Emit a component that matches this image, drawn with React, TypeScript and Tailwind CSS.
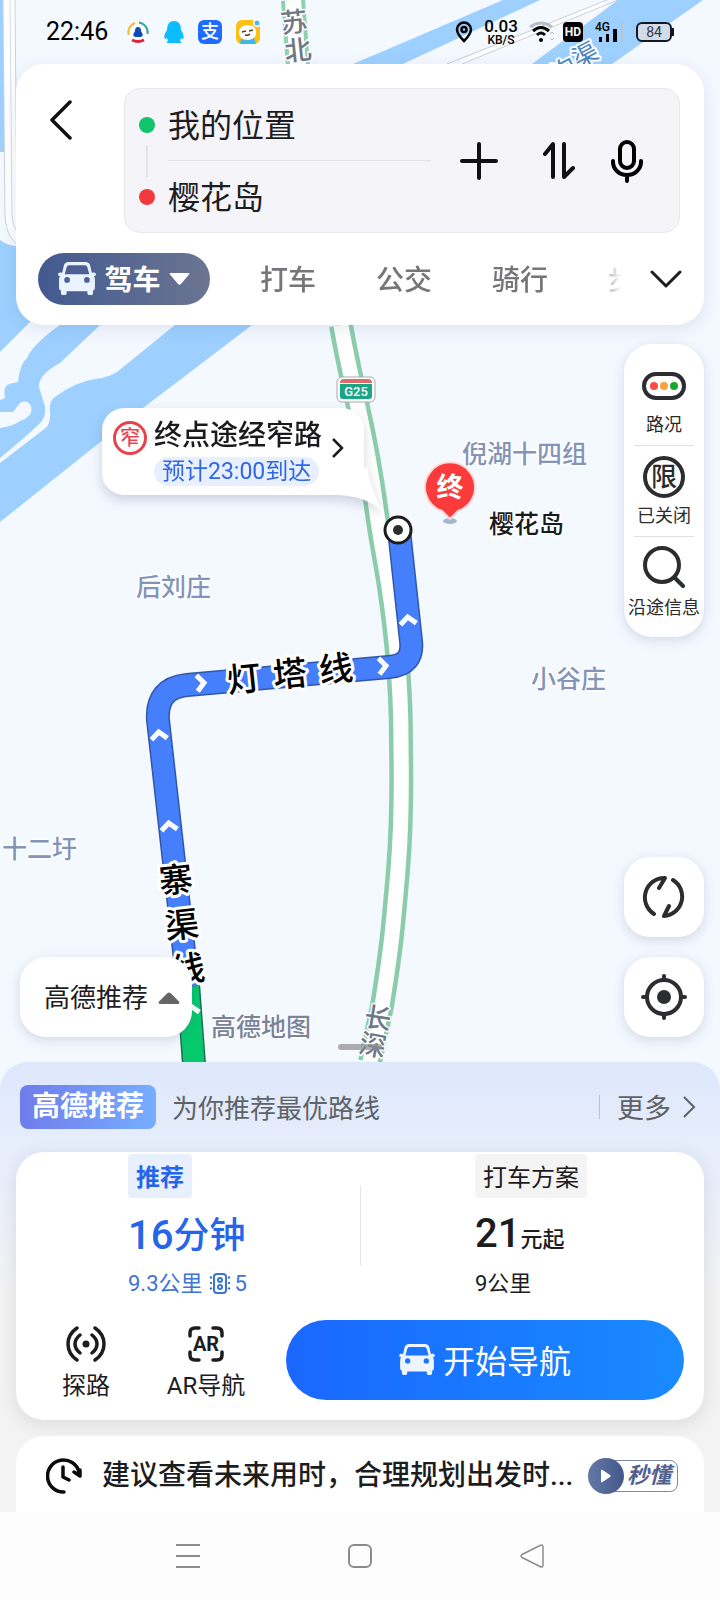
import React from "react";

const CHEVRONS = [
  { x: 408, y: 620, r: -6 },
  { x: 383, y: 666, r: 86 },
  { x: 201, y: 683, r: 85 },
  { x: 159, y: 735, r: -6 },
  { x: 169, y: 826, r: -6 },
  { x: 191, y: 1009, r: -6 },
];

const PLACES = [
  { text: "后刘庄", x: 136, y: 596 },
  { text: "倪湖十四组", x: 462, y: 463 },
  { text: "小谷庄", x: 531, y: 688 },
  { text: "十二圩", x: 2, y: 858 },
];

const ROAD_NAMES = [
  { text: "灯", x: 244, y: 679, r: -6 },
  { text: "塔", x: 290, y: 674, r: -6 },
  { text: "线", x: 336, y: 669, r: -6 },
  { text: "寨", x: 176, y: 880, r: -6 },
  { text: "渠", x: 182, y: 925, r: -6 },
  { text: "线", x: 188, y: 969, r: -6 },
];

const HIGHWAY_NAMES = [
  { text: "苏", x: 294, y: 22, r: -6 },
  { text: "北", x: 298, y: 50, r: -6 },
  { text: "长", x: 378, y: 1018, r: 9 },
  { text: "深", x: 373, y: 1045, r: 11 },
];

const HIGHWAY =
  "M341 325 C346 355 352 380 358 407 S371 470 376 507 S385 560 389 587 S395 630 397 653 S401 710 401 740 S403 810 398 870 S391 950 382 1006 L370 1062";
const ROUTE =
  "M399 530 L411 641 Q414 665 389 667 L187 685 Q156 688 158 720 L174 862 L188 987";

function MapCanvas() {
  return (
    <svg
      className="absolute inset-0 h-full w-full"
      viewBox="0 0 720 1062"
      preserveAspectRatio="xMidYMin slice"
      fontFamily="Roboto, 'Noto Sans CJK SC', sans-serif"
      aria-label="地图"
    >
      <rect width="720" height="1062" fill="#f4f8ff" />
      <g fill="#9dd0ff">
        <path d="M0 0H4V152H0z" />
        <path d="M0 240Q8 246 18 246L34 318L0 352z" />
        <path d="M60 325H100L60 363Q38 375 39 387L45 407Q47 418 37 426Q22 440 0 458V428Q14 426 20 421Q34 416 31 406Q27 399 20 403L13 412H0V400L5 398Q3 386 9 384L18 382Q20 364 27 358Q33 344 60 325z" />
        <path d="M175 325H252L143 408L0 522V463L47 427Q51 420 50 411Q49 401 55 397Q75 382 95 379Q113 377 122 368z" />
        <path d="M503 0H540L403 64H353z" />
        <path d="M618 0H703L612 64H532z" />
      </g>
      <path d="M607 0L447 64" stroke="#c9ccd2" strokeWidth="1" fill="none" />
      <path d="M605 4L462 62" stroke="#ffffff" strokeWidth="5" fill="none" />
      <path d="M618 0L462 64" stroke="#c9ccd2" strokeWidth="1" fill="none" />
      <path d="M9 0L11 215Q12 242 34 244" stroke="#c6d3e3" strokeWidth="13" fill="none" />
      <path d="M9 0L11 215Q12 242 34 244" stroke="#ffffff" strokeWidth="11" fill="none" />
      <path d="M10 0L12 213Q12 236 30 240" stroke="#cddcec" strokeWidth="1" fill="none" />

      <path d="M293 0L298 66" stroke="#8fd0ae" strokeWidth="24" />
      <path d="M293 0L298 66" stroke="#ffffff" strokeWidth="16" />
      <path d={HIGHWAY} stroke="#8bcdab" strokeWidth="24" fill="none" />
      <path d={HIGHWAY} stroke="#ffffff" strokeWidth="15" fill="none" />

      <g>
        <rect x="337" y="377" width="38" height="25" rx="5" fill="#ffffff" stroke="#a9a9a9" />
        <path d="M340 383q0-4 4-4h24q4 0 4 4z" fill="#dd6b6b" />
        <path d="M340 384h32v12q0 3-3 3h-26q-3 0-3-3z" fill="#1aa587" />
        <text x="356" y="396" textAnchor="middle" fontSize="13" fontWeight="500" fill="#ffffff">G25</text>
      </g>

      <g fill="none" strokeLinejoin="round">
        <path d="M188 984L194 1064" stroke="#1b6f55" strokeWidth="24" />
        <path d="M188 984L194 1064" stroke="#06c96e" strokeWidth="21" />
        <path d={ROUTE} stroke="#3057a8" strokeWidth="24" />
        <path d={ROUTE} stroke="#457ffc" strokeWidth="21" />
        {CHEVRONS.map((c) => (
          <path
            key={`${c.x}-${c.y}`}
            d="M-8 4L0 -3L8 4"
            transform={`translate(${c.x} ${c.y}) rotate(${c.r})`}
            stroke="#ffffff"
            strokeWidth="5"
            strokeLinejoin="miter"
          />
        ))}
      </g>
      <circle cx="398" cy="530" r="13" fill="#ffffff" stroke="#1d1d1f" strokeWidth="3" />
      <circle cx="398" cy="530" r="5" fill="#2d2d2f" />

      <g fill="#8394b8" fontSize="25" fontWeight="500" stroke="#ffffff" strokeWidth="3" strokeLinejoin="round" paintOrder="stroke">
        {PLACES.map((p) => (
          <text key={p.text} x={p.x} y={p.y}>{p.text}</text>
        ))}
      </g>
      <g fontSize="34" fontWeight="500" stroke="#ffffff" strokeWidth="6" strokeLinejoin="round" textAnchor="middle" paintOrder="stroke">
        {ROAD_NAMES.map((p) => (
          <text key={`${p.text}${p.y}`} transform={`translate(${p.x} ${p.y}) rotate(${p.r})`} y="12">{p.text}</text>
        ))}
      </g>
      <g fontSize="27" fontWeight="500" fill="#6f7888" stroke="#ffffff" strokeWidth="3" strokeLinejoin="round" textAnchor="middle" paintOrder="stroke">
        {HIGHWAY_NAMES.map((p) => (
          <text key={p.text} transform={`translate(${p.x} ${p.y}) rotate(${p.r})`} y="10">{p.text}</text>
        ))}
      </g>
      <g fontSize="25" fill="#4a86c5" stroke="#ffffff" strokeWidth="4" strokeLinejoin="round" textAnchor="middle" paintOrder="stroke">
        <text transform="translate(564 70) rotate(-28)" y="9">沟</text>
        <text transform="translate(585 55) rotate(-28)" y="9">渠</text>
      </g>

      <ellipse cx="450" cy="521" rx="7" ry="3" fill="#9fb9c9" />
      <path
        d="M450 519L442 511A25 25 0 1 1 458 511z"
        fill="#fb3a3c"
        stroke="#ffd9d9"
        strokeWidth="2"
        strokeLinejoin="round"
      />
      <text x="450" y="497" textAnchor="middle" fontSize="27" fontWeight="700" fill="#ffffff">终</text>
      <text x="489" y="533" fontSize="25" fontWeight="500" fill="#1a1a1c" stroke="#ffffff" strokeWidth="3" paintOrder="stroke">樱花岛</text>
      <text x="211" y="1036" fontSize="25" fontWeight="500" fill="#7b839c" stroke="#ffffff" strokeWidth="2" paintOrder="stroke">高德地图</text>
    </svg>
  );
}

function CarIcon({ className, hole }: { className: string; hole: string }) {
  return (
    <svg className={className} viewBox="0 0 40 36" fill="currentColor" aria-hidden="true">
      <path d="M11 0h18q4 0 5 4l2 9q3 2 3 6v8q0 3-2 3v3q0 2-2 2h-2q-2 0-2-2v-2H9v2q0 2-2 2H5q-2 0-2-2v-3q-2 0-2-3v-8q0-4 3-6l2-9q1-4 5-4z" />
      <rect x="0" y="11" width="5" height="4" rx="2" />
      <rect x="35" y="11" width="5" height="4" rx="2" />
      <path d="M11.500 3.500h17q2 0 2.500 2L33 13H7l2-7.500q.5-2 2.500-2z" fill={hole} />
      <circle cx="9.500" cy="19" r="3" fill={hole} />
      <circle cx="30.500" cy="19" r="3" fill={hole} />
    </svg>
  );
}

function StatusBar() {
  return (
    <div className="relative flex h-16 items-center pr-[46px] pl-[46px] text-black">
      <time className="w-[80px] text-[25px]">22:46</time>
      <div className="flex items-center gap-[14px]">
        <svg width="24" height="24" viewBox="0 0 24 24" aria-hidden="true">
          <circle cx="12" cy="12" r="11" fill="#fff" />
          <path d="M2.500 15A10 10 0 0 1 9 3" stroke="#f7b731" strokeWidth="2" fill="none" />
          <path d="M13 2.500A10 10 0 0 1 21.500 14" stroke="#35a79c" strokeWidth="2" fill="none" />
          <path d="M6 20Q12 23 18 20" stroke="#d9263c" strokeWidth="3" fill="none" />
          <path d="M12 7q3 0 3 4l2 4-2 2H9l-2-2 2-4q0-4 3-4z" fill="#1148b8" />
        </svg>
        <svg width="20" height="24" viewBox="0 0 20 24" aria-hidden="true">
          <path d="M10 1q7 0 7 9 4 6 2 9-1 0-2-1l-1 3q2 1 1 2H3q-1-1 1-2l-1-3q-1 1-2 1-2-3 2-9 0-9 7-9z" fill="#0cbcff" />
        </svg>
        <div className="grid h-6 w-6 place-items-center rounded-md bg-[#1f6bff] text-lg leading-none font-medium text-white">支</div>
        <svg width="25" height="24" viewBox="0 0 25 24" aria-hidden="true">
          <rect width="24" height="24" rx="6" fill="#fdbf14" />
          <path d="M12 5q8 0 8 8 0 6-7 7-10 0-10-7 0-8 9-8z" fill="#fff" />
          <path d="M6 12l4-1M13 11l4-1M9 15q3 1 5-1" stroke="#5a3a1a" strokeWidth="1.500" fill="none" />
          <path d="M5 19q7 3 13-1l2 6H4z" fill="#3ab6e8" />
          <circle cx="21" cy="3" r="4" fill="#fff" />
          <circle cx="21" cy="3" r="2.500" fill="#58b4e8" />
        </svg>
      </div>
      <svg className="ml-auto" width="18" height="22" viewBox="0 0 18 22" fill="none" stroke="#000" strokeWidth="2.500" aria-hidden="true">
        <path d="M9 20Q2 13 2 8.500A7 7 0 0 1 16 8.500Q16 13 9 20z" />
        <circle cx="9" cy="8.500" r="2.500" />
      </svg>
      <div className="ml-2 flex w-[40px] flex-col items-center font-medium">
        <span className="text-[17px] leading-4">0.03</span>
        <span className="text-xs leading-3">KB/S</span>
      </div>
      <svg className="ml-2" width="26" height="22" viewBox="0 0 26 22" fill="none" aria-hidden="true">
        <path d="M1 6Q12 -2 23 6" stroke="#b9bec6" strokeWidth="3" />
        <path d="M4 10Q12 3 20 10M8 14Q12 10 16 14" stroke="#000" strokeWidth="3" />
        <circle cx="12" cy="19" r="2" fill="#000" />
        <path d="M21 13l2-2 2 2M21 17l2 2 2-2" stroke="#b9bec6" />
      </svg>
      <div className="ml-2 grid h-5 w-5 place-items-center rounded bg-black text-xs font-bold text-white">HD</div>
      <svg className="ml-3" width="29" height="22" viewBox="0 0 29 22" aria-label="4G">
        <text x="0" y="10" fontSize="12" fontWeight="500" fontFamily="Roboto, sans-serif">4G</text>
        <path d="M4 16h3v5H4zM11 13h3v8h-3zM18 8h4v13h-4z" />
        <path d="M26 1h2v20h-2z" fill="#b9c4d2" />
      </svg>
      <div className="ml-3 flex items-center">
        <div className="h-5 w-9 rounded-md border-2 border-[#10182a] bg-[#d3dbe9] text-center text-sm leading-4 text-[#333a48]">84</div>
        <div className="h-2 w-0.5 bg-[#10182a]" />
      </div>
    </div>
  );
}

const TABS = ["打车", "公交", "骑行"];

function SearchCard() {
  return (
    <header className="relative mx-4 rounded-[28px] bg-white pt-6 pb-5 shadow-[0_4px_16px_rgba(60,80,140,0.12)]">
      <div className="flex items-start pr-6">
        <button aria-label="返回" className="mt-3 mr-[52px] ml-[34px] h-10 w-[22px] text-[#111]">
          <svg width="22" height="40" viewBox="0 0 22 40" fill="none" stroke="currentColor" strokeWidth="3.500" strokeLinecap="round" strokeLinejoin="round">
            <path d="M20 2L2 20L20 38" />
          </svg>
        </button>
        <div className="flex h-[145px] min-w-0 flex-1 items-center rounded-2xl border border-[#e9e9ed] bg-[#f4f4f9]">
          <div className="flex w-[43px] flex-col items-center">
            <span className="h-4 w-4 rounded-full bg-[#0fc46b]" />
            <span className="my-3 h-8 w-0.5 bg-[#e4e4e9]" />
            <span className="h-4 w-4 rounded-full bg-[#f23a3c]" />
          </div>
          <div className="min-w-0 flex-1 text-[#1d1d1f]">
            <input aria-label="起点" defaultValue="我的位置" className="block h-[71px] w-full bg-transparent pb-1 text-[32px] outline-none" />
            <div className="h-px bg-[#e2e2e6]" />
            <input aria-label="终点" defaultValue="樱花岛" className="block h-[71px] w-full bg-transparent pb-1 text-[32px] outline-none" />
          </div>
          <div className="mr-9 ml-7 flex items-center gap-11 text-[#111114]">
            <button aria-label="添加途经点">
              <svg width="40" height="40" viewBox="0 0 40 40" stroke="currentColor" strokeWidth="4" strokeLinecap="round">
                <path d="M20 3V37M3 20H37" />
              </svg>
            </button>
            <button aria-label="交换起终点">
              <svg width="32" height="40" viewBox="0 0 32 40" fill="none" stroke="currentColor" strokeWidth="4" strokeLinecap="round" strokeLinejoin="round">
                <path d="M2 13L10 3V36M21 3V36L30 27" />
              </svg>
            </button>
            <button aria-label="语音输入" className="-ml-2 text-black">
              <svg width="32" height="44" viewBox="0 0 32 44" fill="none" stroke="currentColor" strokeWidth="4" strokeLinecap="round">
                <rect x="9" y="3" width="14" height="26" rx="7" />
                <path d="M2 22v1a14 13 0 0 0 28 0v-1M16 36v6" />
              </svg>
            </button>
          </div>
        </div>
      </div>
      <nav className="mt-5 flex items-center px-[22px] text-[28px] leading-none text-[#76767a]">
        <button className="flex h-[52px] w-[172px] items-center justify-center gap-2 rounded-full bg-linear-to-r from-[#43598f] to-[#6b7591] font-bold text-white">
          <CarIcon className="h-[34px] w-[38px] text-[#eaf3ff]" hole="#4c6096" />
          <span className="pt-1">驾车</span>
          <svg width="21" height="12" viewBox="0 0 21 12" fill="currentColor" aria-hidden="true">
            <path d="M1.500 0h18q1.500 0 .5 1.500l-8 9.500q-1.500 1.500-3 0L1 1.500Q0 0 1.500 0z" />
          </svg>
        </button>
        <div className="ml-[50px] flex min-w-0 flex-1 items-center gap-[60px] overflow-hidden mask-r-from-95% mask-r-to-100% pt-1.5 pb-0.5">
          {TABS.map((t) => (
            <button key={t} className="shrink-0 font-medium">{t}</button>
          ))}
          <button className="shrink-0 font-medium text-[#a5a5a8]">步行</button>
        </div>
        <button aria-label="展开" className="ml-7 text-[#1d1d1f]">
          <svg width="32" height="18" viewBox="0 0 32 18" fill="none" stroke="currentColor" strokeWidth="3" strokeLinecap="round" strokeLinejoin="round">
            <path d="M2 2L16 16L30 2" />
          </svg>
        </button>
      </nav>
    </header>
  );
}

function Callout() {
  return (
    <button className="absolute top-[408px] left-[102px] flex h-[87px] items-start rounded-[22px] bg-white pt-[11px] pr-5 pl-[11px] text-left drop-shadow-[0_5px_6px_rgba(60,70,100,0.22)]">
      <svg className="absolute top-[58px] left-[235px]" width="48" height="48" viewBox="0 0 48 48" fill="#fff" aria-hidden="true">
        <path d="M30 0Q33 22 46 46Q30 30 0 29z" />
      </svg>
      <span className="relative mt-0.5 grid h-[34px] w-[34px] place-items-center rounded-full border-3 border-[#e8434d] text-xl leading-none font-medium text-[#e8434d]">窄</span>
      <span className="relative ml-[7px] flex flex-col items-start">
        <span className="text-[28px] leading-[34px] font-medium text-[#1b1b1d]">终点途经窄路</span>
        <span className="mt-1 rounded-full bg-[#e8effe] px-2 text-[23px] leading-[29px] text-[#2f67e6]">预计23:00到达</span>
      </span>
      <svg className="relative mt-[18px] ml-2.5" width="12" height="22" viewBox="0 0 12 22" fill="none" stroke="#1b1b1d" strokeWidth="2.500" aria-hidden="true">
        <path d="M1 2L10 11L1 20" />
      </svg>
    </button>
  );
}

function MapTools() {
  return (
    <div className="relative mt-[19px] flex w-20 flex-col items-center self-end rounded-[28px] bg-white text-lg leading-6 whitespace-nowrap text-[#2b2b2d] shadow-[0_3px_12px_rgba(60,70,110,0.18)]">
      <button className="flex h-[101px] flex-col items-center justify-end pb-2">
        <svg width="44" height="28" viewBox="0 0 44 28" className="mb-[13px]" aria-hidden="true">
          <rect x="2" y="2" width="40" height="24" rx="12" fill="#fff" stroke="#2b2d30" strokeWidth="4" />
          <circle cx="12" cy="14" r="4" fill="#fb4b45" />
          <circle cx="22" cy="14" r="4" fill="#f9a13c" />
          <circle cx="32" cy="14" r="4" fill="#19a82f" />
        </svg>
        路况
      </button>
      <span className="h-px w-[60px] bg-[#e0e0e2]" />
      <button className="flex h-[90px] flex-col items-center justify-end pb-2">
        <span className="mb-1.5 grid h-[42px] w-[42px] place-items-center rounded-full border-4 border-[#2b2d30] text-[26px] leading-none font-medium">限</span>
        已关闭
      </button>
      <span className="h-px w-[60px] bg-[#e0e0e2]" />
      <button className="flex h-[100px] flex-col items-center justify-end pb-[17px]">
        <svg width="42" height="43" viewBox="0 0 42 43" className="mb-2" fill="none" stroke="#2b2d30" strokeWidth="4" strokeLinecap="round" aria-hidden="true">
          <circle cx="19" cy="20" r="17" />
          <path d="M32 33L40 41" />
        </svg>
        沿途信息
      </button>
    </div>
  );
}

function RouteSheet() {
  return (
    <section className="relative flex flex-col rounded-t-[28px] bg-[#f5f5f6] bg-linear-to-b from-[#dee8fc] from-0% via-[#e9effb] via-25% to-[#f3f3f4] to-50%">
      <div className="flex h-[90px] items-center pr-6 pl-5 text-[26px] leading-none text-[#5f6368]">
        <h2 className="flex h-11 items-center rounded-lg bg-linear-to-r from-[#6f7ceb] to-[#76aeff] px-3 text-[28px] font-bold text-white">高德推荐</h2>
        <p className="ml-4 pt-1">为你推荐最优路线</p>
        <span className="ml-auto h-6 w-px bg-[#b8c1d3]" />
        <button className="ml-[17px] flex items-center gap-3">
          <span className="pt-1 text-[27px]">更多</span>
          <svg width="13" height="22" viewBox="0 0 13 22" fill="none" stroke="currentColor" strokeWidth="2" aria-hidden="true">
            <path d="M1 1L11 11L1 21" />
          </svg>
        </button>
      </div>

      <div className="mx-4 rounded-[28px] bg-white pt-0.5 pb-5 shadow-[0_4px_20px_rgba(0,0,0,0.10)]">
        <div className="relative grid grid-cols-2">
          <button className="flex flex-col items-start pl-28 text-[#2565ea]">
            <span className="flex h-11 items-center rounded bg-[#e8effe] px-2 pt-1 text-2xl font-bold">推荐</span>
            <span className="flex h-[72px] items-center pt-1 text-4xl leading-none font-medium"><span className="text-[40px] leading-none">16</span>分钟</span>
            <span className="flex h-7 items-center text-[22px] leading-none text-[#3b74d8]">
              9.3公里
              <svg className="mr-1 ml-1.5" width="22" height="22" viewBox="0 0 22 22" fill="none" stroke="currentColor" strokeWidth="2" aria-hidden="true">
                <rect x="5" y="1" width="12" height="19" rx="3" />
                <circle cx="11" cy="7" r="2" />
                <circle cx="11" cy="14" r="2" />
                <path d="M1 4l2 1M1 10h2M1 16l2-1M21 4l-2 1M21 10h-2M21 16l-2-1" />
              </svg>
              5
            </span>
          </button>
          <button className="flex flex-col items-start pl-[115px] text-[#1d1d1f]">
            <span className="flex h-11 items-center rounded bg-[#f4f4f5] px-2 pt-1 text-2xl">打车方案</span>
            <span className="flex h-[72px] items-center">
              <span className="text-[22px] leading-none font-medium"><span className="text-[40px]">21</span>元起</span>
            </span>
            <span className="flex h-7 items-center text-[22px] leading-none">9公里</span>
          </button>
          <span className="absolute top-8 left-1/2 h-20 w-px bg-[#e4e4e6]" />
        </div>
        <div className="mt-[22px] flex h-20 items-stretch pr-5 pl-[10px] text-[#1d1d1f]">
          <button className="flex w-[120px] flex-col items-center justify-between pt-1.5 text-2xl leading-7">
            <svg width="40" height="36" viewBox="0 0 40 36" fill="none" stroke="currentColor" strokeWidth="3.500" strokeLinecap="round" aria-hidden="true">
              <circle cx="20" cy="18" r="3.500" fill="currentColor" stroke="none" />
              <path d="M14 9Q9 13 9 18T14 27M26 9Q31 13 31 18T26 27M11 2Q2 8 2 18T11 34M29 2Q38 8 38 18T29 34" />
            </svg>
            探路
          </button>
          <button className="flex w-[120px] flex-col items-center justify-between pt-1.5 text-2xl leading-7">
            <svg width="36" height="36" viewBox="0 0 36 36" fill="none" stroke="currentColor" strokeWidth="3.500" strokeLinecap="round" aria-hidden="true">
              <path d="M2 10V7Q2 2 7 2H11M25 2H29Q34 2 34 7V10M34 26V29Q34 34 29 34H25M11 34H7Q2 34 2 29V26" />
              <text x="18" y="25" textAnchor="middle" fontSize="20" fontWeight="700" fontFamily="Roboto, sans-serif" fill="currentColor" stroke="none">AR</text>
            </svg>
            AR导航
          </button>
          <button className="ml-5 flex flex-1 items-center justify-center gap-2 rounded-full bg-linear-to-r from-[#1b67ff] to-[#1a8aff] text-[32px] leading-none text-white">
            <CarIcon className="h-8 w-9 text-[#eef5ff]" hole="#1b75ff" />
            <span className="pt-1">开始导航</span>
          </button>
        </div>
      </div>

      <button className="mx-4 mt-4 flex h-[76px] items-center rounded-t-[28px] bg-white pt-1 pr-[26px] pl-[30px] text-[#1d1d1f]">
        <svg width="36" height="36" viewBox="0 0 36 36" className="shrink-0" fill="none" stroke="#0b0b0c" strokeWidth="3.500" strokeLinecap="round" strokeLinejoin="round" aria-hidden="true">
          <path d="M18 34A16 16 0 1 1 33 14M34 18L28 14M34 18L34 12M17 9V19L23 22" />
        </svg>
        <span className="ml-5 min-w-0 flex-1 text-left text-[28px] leading-9 font-medium whitespace-nowrap">建议查看未来用时，合理规划出发时...</span>
        <span className="flex shrink-0 items-center">
          <span className="z-10 grid h-9 w-9 place-items-center rounded-full bg-linear-to-r from-[#6478a8] to-[#44578a]">
            <svg width="12" height="14" viewBox="0 0 12 14" fill="#fff" aria-hidden="true">
              <path d="M1 1.500Q1 0 2.500 1L10 6Q11.500 7 10 8L2.500 13Q1 14 1 12.500z" />
            </svg>
          </span>
          <span className="-ml-3 rounded-r-lg border border-[#8087a0] pr-1.5 pl-[14px] text-[22px] leading-[30px] font-bold text-[#50618f] italic">秒懂</span>
        </span>
      </button>
    </section>
  );
}

function SystemNav() {
  return (
    <footer className="relative flex h-[88px] items-center justify-center gap-[148px] bg-[#fdfdfd] text-[#8c8c8c]">
      <button aria-label="最近任务">
        <svg width="24" height="24" viewBox="0 0 24 24" stroke="currentColor" strokeWidth="2"><path d="M0 1H24M0 12H24M0 23H24" /></svg>
      </button>
      <button aria-label="主屏幕">
        <svg width="24" height="24" viewBox="0 0 24 24" fill="none" stroke="currentColor" strokeWidth="2"><rect x="1" y="1" width="22" height="22" rx="5" /></svg>
      </button>
      <button aria-label="返回上一页">
        <svg width="24" height="24" viewBox="0 0 24 24" fill="none" stroke="currentColor" strokeWidth="1.500" strokeLinejoin="round"><path d="M2 10.500L20 1.500Q23 0 23 3V21Q23 24 20 22.500L2 13.500Q0 12 2 10.500z" /></svg>
      </button>
    </footer>
  );
}

export default function App() {
  return (
    <div className="flex min-h-screen flex-col bg-[#f4f8ff] font-[Roboto,'Noto_Sans_CJK_SC',sans-serif]">
      <main className="relative flex flex-col">
        <MapCanvas />
        <StatusBar />
        <SearchCard />
        <Callout />
        <div className="relative flex flex-col px-4 pb-[25px]">
          <MapTools />
          <button aria-label="切换路线" className="mt-[220px] grid h-20 w-20 place-items-center self-end rounded-[26px] bg-white shadow-[0_3px_12px_rgba(60,70,110,0.18)]">
            <svg width="44" height="44" viewBox="0 0 44 44" fill="none" stroke="#2b2d30" strokeWidth="4" strokeLinecap="round" strokeLinejoin="round">
              <path d="M12 39A19.500 19.500 0 0 1 23 3L17 13M31 5A19.500 19.500 0 0 1 22 41L27 31" />
            </svg>
          </button>
          <div className="mt-5 flex justify-between">
            <button className="ml-1 flex h-20 w-[172px] items-center justify-center gap-2.5 rounded-[26px] bg-white pt-0.5 pl-3 text-[26px] text-[#1d1d1f] shadow-[0_3px_12px_rgba(60,70,110,0.18)]">
              高德推荐
              <svg width="22" height="12" viewBox="0 0 22 12" fill="#666" aria-hidden="true"><path d="M9.500 1Q11 0 12.500 1L21 9.500Q22 12 20 12H2Q0 12 1 9.500z" /></svg>
            </button>
            <button aria-label="定位" className="grid h-20 w-20 place-items-center rounded-[26px] bg-white shadow-[0_3px_12px_rgba(60,70,110,0.18)]">
              <svg width="46" height="46" viewBox="0 0 46 46" fill="none" stroke="#2b2d30" strokeWidth="4" strokeLinecap="round">
                <circle cx="23" cy="23" r="17" />
                <circle cx="23" cy="23" r="7" fill="#2b2d30" stroke="none" />
                <path d="M23 2V6M23 40V44M2 23H6M40 23H44" />
              </svg>
            </button>
          </div>
          <span className="absolute bottom-3 left-1/2 h-1.5 w-11 -translate-x-1/2 rounded-full bg-[#8a8c91]/70" />
        </div>
      </main>
      <RouteSheet />
      <SystemNav />
    </div>
  );
}
